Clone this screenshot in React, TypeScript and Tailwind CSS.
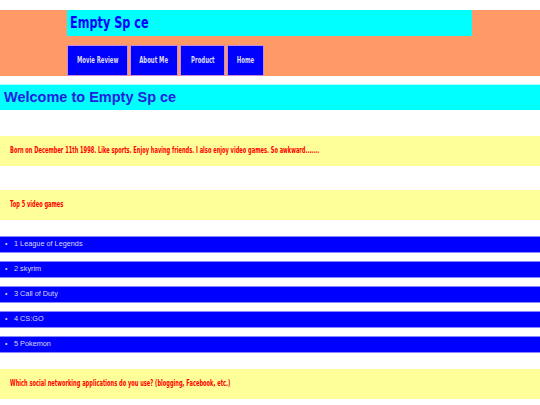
const impact = "font-['Impact','Liberation_Sans_Narrow','DejaVu_Sans_Condensed',sans-serif] font-bold";

const NavButton = ({ label, w }: { label: string; w: string }) => (
  <div
    className={`${w} h-[31px] flex items-center justify-center bg-[#0000ff] border border-[#c58bd8] text-[#dcdcf0] text-[8.5px] ${impact}`}
  >
    <span className="inline-block scale-x-[0.7] whitespace-nowrap">{label}</span>
  </div>
);

const YellowBox = ({ children }: { children: React.ReactNode }) => (
  <div className={`h-[30px] flex items-center pl-[10px] bg-[#ffff99] text-[#ff0000] text-[9px] ${impact} whitespace-nowrap`}>
    <span className="inline-block origin-left scale-x-[0.63]">{children}</span>
  </div>
);

const games = ['1 League of Legends', '2 skyrim', '3 Call of Duty', '4 CS:GO', '5 Pokemon'];

export default function App() {
  return (
    <div className="w-[540px] h-[405px] overflow-hidden bg-white font-['Liberation_Sans',Arial,sans-serif]">
      <div className="h-[10px]" />
      <div className="h-[66px] bg-[#ff9966] pl-[67px]">
        <div className="w-[405px] h-[26px] bg-[#00ffff] flex items-center pl-[3px]">
          <span className={`inline-block origin-left scale-x-[0.76] text-[#0000ff] text-[16.5px] ${impact}`}>Empty Sp ce</span>
        </div>
        <div className="flex gap-[2px] mt-[9px]">
          <NavButton label="Movie Review" w="w-[61px]" />
          <NavButton label="About Me" w="w-[48px]" />
          <NavButton label="Product" w="w-[45px]" />
          <NavButton label="Home" w="w-[37px]" />
        </div>
      </div>
      <div className="h-[8px]" />
      <div className="h-[26px] bg-[#00ffff] flex items-center pl-[4px] border-t border-[#aaffff]">
        <h1 className="text-[#2020e0] text-[14.5px] font-bold">Welcome to Empty Sp ce</h1>
      </div>
      <div className="h-[26px]" />
      <YellowBox>Born on December 11th 1998. Like sports. Enjoy having friends. I also enjoy video games. So awkward.......</YellowBox>
      <div className="h-[24px]" />
      <YellowBox>Top 5 video games</YellowBox>
      <ul className="mt-[16px] flex flex-col gap-[8px]">
        {games.map((g) => (
          <li
            key={g}
            className="h-[17px] bg-[#0000ff] border-y border-[#8888ff] flex items-center pl-[5px] text-[#d8d8ee] text-[7.3px]"
          >
            <span className="w-[9px] text-[7px]">•</span>
            <span>{g}</span>
          </li>
        ))}
      </ul>
      <div className="h-[16px]" />
      <YellowBox>Which social networking applications do you use? (blogging, Facebook, etc.)</YellowBox>
    </div>
  );
}
